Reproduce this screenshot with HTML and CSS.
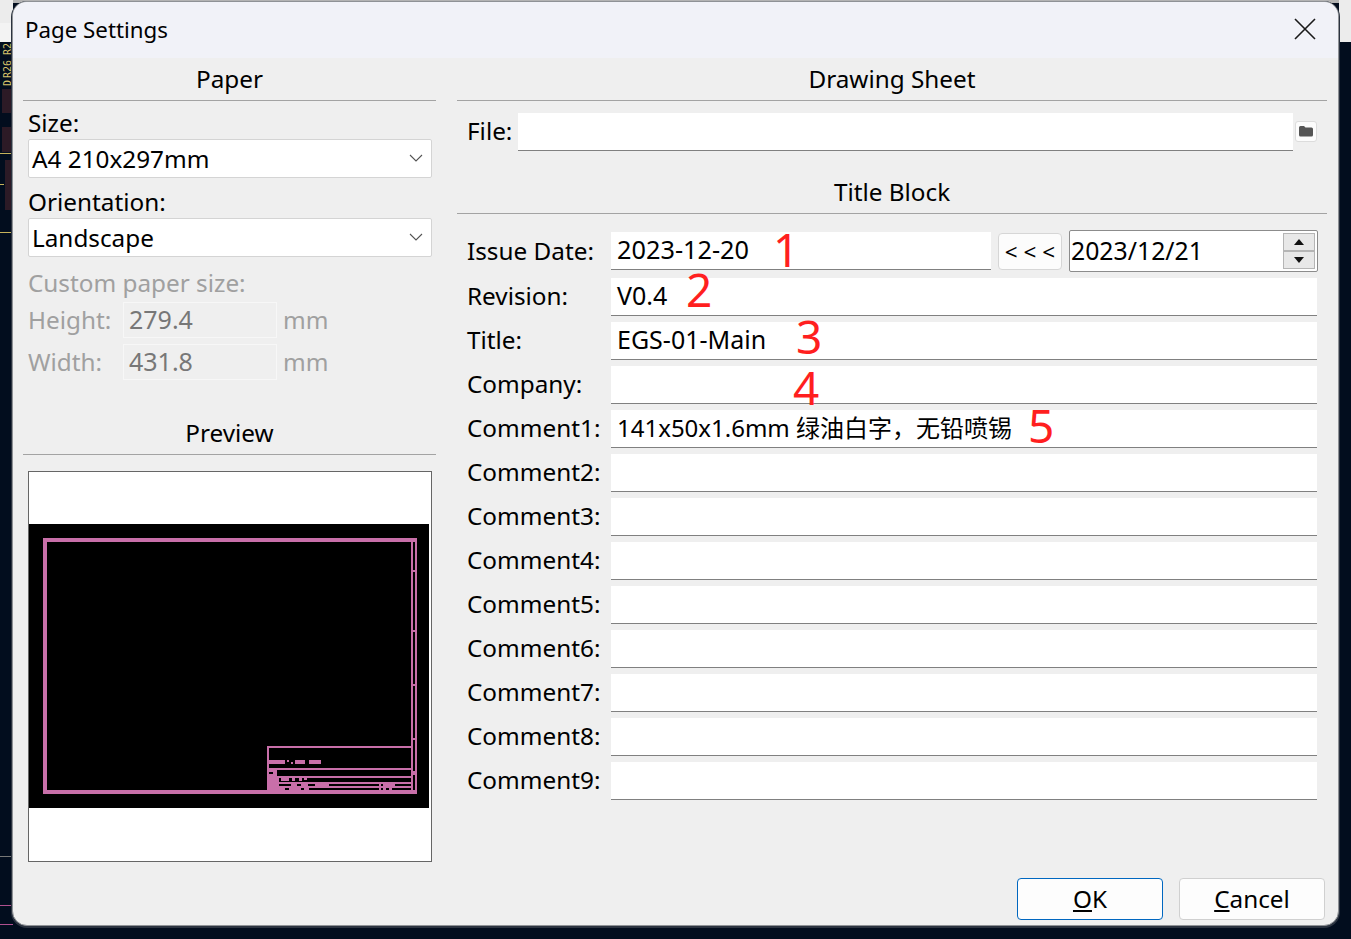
FILE: index.html
```html
<!DOCTYPE html>
<html lang="en">
<head>
<meta charset="utf-8">
<title>Page Settings</title>
<link rel="stylesheet" href="styles.css">
</head>
<body>
<div class="desktop">
  <div class="topstrip"></div>
  <div class="sideband left"></div>
  <div class="sideband left lower"></div>
  <div class="sideband right"></div>
  <svg class="pcb" width="13" height="939" viewBox="0 0 13 939">
    <g fill="#2c1a26"><rect x="2" y="89" width="11" height="24"/><rect x="2" y="127" width="11" height="25"/><rect x="5" y="160" width="8" height="50"/></g>
    <text transform="translate(11 55) rotate(-90)" class="pcbtext">R2</text>
    <text transform="translate(11 78) rotate(-90)" class="pcbtext">R26</text>
    <text transform="translate(11 86) rotate(-90)" class="pcbtext">D</text>
    <path d="M0 153.500H13M0 232.500H13" stroke="#c7b25a" stroke-width="1"/><path d="M0 184.500H4" stroke="#c7b25a"/>
    <path d="M0 856.500H13" stroke="#777"/><path d="M0 905.500H13" stroke="#b0508f"/><path d="M0 924.500H13" stroke="#b0508f"/>
  </svg>
  <section class="dialog">
    <header class="titlebar">
      <span class="title">Page Settings</span>
      <svg class="close" width="22" height="22" viewBox="0 0 22 22"><path d="M1 1L21 21M21 1L1 21" stroke="#1a1a1a" stroke-width="1.6" fill="none"/></svg>
    </header>
    <div class="content">
      <div class="col-left">
        <h2 class="section-head">Paper</h2>
        <div class="paper-fields">
          <label class="lbl">Size:</label>
          <div class="combo"><span>A4 210x297mm</span><svg width="14" height="8" viewBox="0 0 14 8"><path d="M1 1L7 7L13 1" fill="none" stroke="#555" stroke-width="1.1"/></svg></div>
          <label class="lbl orient">Orientation:</label>
          <div class="combo"><span>Landscape</span><svg width="14" height="8" viewBox="0 0 14 8"><path d="M1 1L7 7L13 1" fill="none" stroke="#555" stroke-width="1.1"/></svg></div>
          <div class="lbl disabled custom">Custom paper size:</div>
          <div class="custom-grid">
            <span class="disabled">Height:</span><span class="dis-input">279.4</span><span class="disabled">mm</span>
            <span class="disabled">Width:</span><span class="dis-input">431.8</span><span class="disabled">mm</span>
          </div>
        </div>
        <h2 class="section-head preview-head">Preview</h2>
        <div class="preview">
          <svg class="sheet" width="400" height="284" viewBox="0 0 400 284">
            <rect width="400" height="284" fill="#000"/>
            <g fill="#c86fa9">
              <rect x="14" y="14" width="374" height="4"/><rect x="14" y="14" width="4" height="256"/><rect x="14" y="266" width="374" height="4"/>
              <rect x="386" y="14" width="2" height="256"/><rect x="382" y="14" width="2" height="256"/>
              <rect x="384" y="46" width="2" height="2"/><rect x="384" y="106" width="2" height="2"/><rect x="384" y="160" width="2" height="2"/><rect x="384" y="214" width="2" height="2"/><rect x="384" y="247" width="2" height="4"/>
              <rect x="238" y="222" width="144" height="2"/><rect x="238" y="222" width="2" height="22"/>
              <rect x="238" y="244" width="144" height="2"/><rect x="248" y="252" width="134" height="2"/><rect x="248" y="258" width="134" height="2"/><rect x="248" y="262" width="134" height="2"/>
              <rect x="240" y="236" width="16" height="4"/><rect x="258" y="236" width="2" height="2"/><rect x="262" y="238" width="2" height="2"/><rect x="266" y="236" width="10" height="4"/><rect x="280" y="236" width="12" height="4"/>
              <path d="M238 244H248V252H250V266H238ZM240 248V250H244V248Z" fill-rule="evenodd"/>
              <rect x="252" y="252" width="8" height="5"/><rect x="263" y="254" width="3" height="3"/><rect x="270" y="254" width="3" height="3"/><rect x="275" y="254" width="3" height="2"/>
              <rect x="262" y="258" width="6" height="4"/><rect x="272" y="258" width="7" height="4"/><rect x="286" y="258" width="14" height="4"/>
              <rect x="250" y="264" width="6" height="2"/><rect x="260" y="264" width="12" height="2"/><rect x="275" y="264" width="5" height="2"/>
              <rect x="350" y="258" width="2" height="8"/><rect x="354" y="258" width="12" height="4"/><rect x="354" y="262" width="3" height="4"/><rect x="360" y="262" width="3" height="4"/>
            </g>
          </svg>
        </div>
      </div>
      <div class="col-right">
        <h2 class="section-head">Drawing Sheet</h2>
        <div class="file-row">
          <span class="field-label">File:</span>
          <div class="field file-field"></div>
          <div class="browse"><svg width="14" height="12" viewBox="0 0 14 12"><path d="M0 2.500Q0 1 1.500 1H5L6.500 2.500H12.500Q14 2.500 14 4V10Q14 11.500 12.500 11.500H1.500Q0 11.500 0 10Z" fill="#555"/></svg></div>
        </div>
        <h2 class="section-head block-head">Title Block</h2>
        <div class="rows">
          <div class="row date-row">
            <span class="field-label">Issue Date:</span>
            <div class="field date-field">2023-12-20<b class="mark m1">1</b></div>
            <div class="arrows">&lt;&nbsp;&lt;&nbsp;&lt;</div>
            <div class="spin"><span>2023/12/21</span>
              <div class="spin-btns"><i class="up"></i><i class="down"></i></div>
            </div>
          </div>
          <div class="row"><span class="field-label">Revision:</span><div class="field">V0.4<b class="mark m2">2</b></div></div>
          <div class="row"><span class="field-label">Title:</span><div class="field">EGS-01-Main<b class="mark m3">3</b></div></div>
          <div class="row"><span class="field-label">Company:</span><div class="field"><b class="mark m4">4</b></div></div>
          <div class="row"><span class="field-label">Comment1:</span><div class="field small">141x50x1.6mm 绿油白字，无铅喷锡<b class="mark m5">5</b></div></div>
          <div class="row"><span class="field-label">Comment2:</span><div class="field"></div></div>
          <div class="row"><span class="field-label">Comment3:</span><div class="field"></div></div>
          <div class="row"><span class="field-label">Comment4:</span><div class="field"></div></div>
          <div class="row"><span class="field-label">Comment5:</span><div class="field"></div></div>
          <div class="row"><span class="field-label">Comment6:</span><div class="field"></div></div>
          <div class="row"><span class="field-label">Comment7:</span><div class="field"></div></div>
          <div class="row"><span class="field-label">Comment8:</span><div class="field"></div></div>
          <div class="row"><span class="field-label">Comment9:</span><div class="field"></div></div>
        </div>
        <div class="buttons">
          <button class="btn primary"><u>O</u>K</button>
          <button class="btn"><u>C</u>ancel</button>
        </div>
      </div>
    </div>
  </section>
</div>
</body>
</html>
```
FILE: styles.css
```css
html, body { margin: 0; height: 100%; }
body { background: #020d1e; font-family: "Noto Sans", "Noto Sans CJK SC", sans-serif; font-size: 24.3px; color: #000; overflow: hidden; }
.desktop { position: relative; width: 1351px; height: 939px; overflow: hidden; }
.topstrip { position: absolute; left: 0; top: 0; width: 100%; height: 3px; background: #b3b3b3; }
.sideband { position: absolute; top: 0; height: 42px; background: #ececec; }
.sideband.left { left: 0; width: 13px; height: 23px; }
.sideband.left.lower { top: 23px; height: 19px; background: #f3f3f3; }
.sideband.right { right: 0; width: 12px; }
.pcb { position: absolute; left: 0; top: 0; }
.pcbtext { font-family: "DejaVu Sans Mono", monospace; font-size: 10px; fill: #d8c46a; }
.dialog { position: absolute; left: 12px; top: 1px; width: 1327px; height: 925px; box-sizing: border-box; border: 1px solid #8f9296; border-radius: 15px; background: #efefef; overflow: hidden; display: flex; flex-direction: column; box-shadow: 0 1px 0 1px #2b3340; }
.titlebar { height: 56px; flex: none; background: #f1f2f8; display: flex; align-items: center; justify-content: space-between; padding: 0 22px 0 12px; }
.title { font-size: 22.3px; line-height: 58px; }
.close { margin-bottom: 2px; }
.content { flex: 1; display: grid; grid-template-columns: 413px 870px; column-gap: 21px; padding: 0 0 0 10px; }
.section-head { margin: 0; font-size: 24.3px; font-weight: 400; text-align: center; height: 42px; line-height: 41px; border-bottom: 1px solid #a3a3a3; }
.paper-fields { padding: 5px 4px 0 5px; }
.lbl { display: block; height: 33px; line-height: 33px; }
.orient { margin-top: 6px; height: 34px; line-height: 35px; }
.combo { height: 36px; background: #fff; border: 1px solid #d4d4d4; border-radius: 2px; display: flex; align-items: center; justify-content: space-between; padding: 0 8px 1px 3px; }
.disabled { color: #a0a0a0; }
.custom { margin-top: 7px; height: 38px; line-height: 38px; }
.custom-grid { display: grid; grid-template-columns: 95px 154px auto; grid-auto-rows: 36px; row-gap: 6px; align-items: center; justify-content: start; line-height: 32px; }
.custom-grid > span:nth-child(3n) { padding-left: 6px; }
.dis-input { height: 36px; box-sizing: border-box; border: 1px solid #f7f7f7; color: #777; font-size: 25px; line-height: 32px; padding-left: 5px; }
.preview-head { margin-top: 32px; }
.preview { margin: 16px 4px 0 5px; height: 391px; box-sizing: border-box; background: #fff; border: 1px solid #666; padding-top: 52px; }
.sheet { display: block; }
.col-right { display: flex; flex-direction: column; }
.file-row { display: flex; align-items: center; height: 38px; margin-top: 12px; padding-left: 10px; }
.field-label { flex: none; width: 144px; padding-bottom: 4px; }
.date-row .field-label { padding-bottom: 2px; }
.file-row .field-label { width: 51px; padding-bottom: 4px; }
.field { position: relative; flex: 1; height: 38px; box-sizing: border-box; background: #fff; border-bottom: 1px solid #808080; padding-left: 6px; font-size: 25px; line-height: 35px; white-space: nowrap; }
.field.small { font-size: 24px; }
.file-field { flex: 1; }
.browse { width: 22px; height: 21px; margin: 0 10px 2px 2px; background: #fcfcfc; border: 1px solid #dcdcdc; border-radius: 3px; display: flex; align-items: center; justify-content: center; flex: none; box-sizing: border-box; }
.block-head { margin-top: 19px; height: 43px; line-height: 44px; }
.rows { margin-top: 18px; display: flex; flex-direction: column; gap: 6px; padding: 0 10px; }
.row { display: flex; align-items: center; height: 38px; }
.date-row { margin-bottom: 2px; }
.date-field { flex: none; width: 380px; font-size: 25.3px; }
.arrows { flex: none; width: 64px; height: 37px; box-sizing: border-box; margin-left: 7px; background: #fcfcfc; border: 1px solid #d6d6d6; border-radius: 4px; text-align: center; line-height: 36px; font-size: 22.5px; }
.spin { flex: 1; height: 42px; box-sizing: border-box; margin: 0 -1px 0 7px; background: #fff; border: 1px solid #8c8c8c; border-radius: 2px; display: flex; align-items: center; justify-content: space-between; padding: 0 2px 0 1px; font-size: 24.8px; }
.spin > span { padding-bottom: 2px; }
.spin-btns { width: 32px; height: 36px; display: flex; flex-direction: column; }
.spin-btns i { flex: 1; background: #e8e8e8; border: 1px solid #b5b5b5; position: relative; display: block; }
.spin-btns i::after { content: ""; position: absolute; left: 10px; top: 5px; border-left: 5px solid transparent; border-right: 5px solid transparent; }
.up::after { border-bottom: 6px solid #111; }
.down::after { border-top: 6px solid #111; }
.mark { position: absolute; font-weight: 400; font-size: 46px; line-height: 34px; color: #ff1f1f; }
.m1 { left: 162px; top: 0; }
.m2 { left: 75px; top: -6px; }
.m3 { left: 185px; top: -3px; }
.m4 { left: 182px; top: 4px; }
.m5 { left: 417px; top: -2px; }
.buttons { margin-top: auto; display: flex; justify-content: flex-end; gap: 16px; padding: 0 2px 5px 0; }
.btn { width: 146px; height: 42px; padding: 0; background: #fdfdfd; border: 1px solid #d0d0d0; border-radius: 4px; font: inherit; color: #000; line-height: 38px; }
.primary { border-color: #0067c0; }
```
